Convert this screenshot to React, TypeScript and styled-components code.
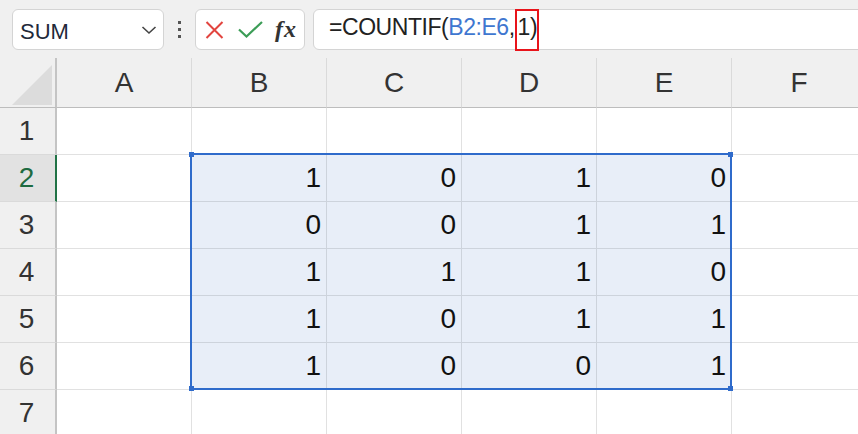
import React from 'react';
import styled, { createGlobalStyle, css } from 'styled-components';

const GlobalStyle = createGlobalStyle`
  html, body {
    margin: 0;
    padding: 0;
    background: #f0f0f0;
    overflow: hidden;
  }
  * {
    box-sizing: border-box;
  }
`;

const Page = styled.div`
  width: 858px;
  height: 434px;
  overflow: hidden;
  font-family: 'Liberation Sans', Arial, sans-serif;
  background: #f0f0f0;
`;

// Formula bar
const Toolbar = styled.div`
  height: 58px;
  display: flex;
  align-items: flex-start;
  padding: 9px 0 0 12px;
`;

const Box = styled.div`
  height: 41px;
  background: #fff;
  border: 1px solid #d4d4d4;
  border-radius: 6px;
  display: flex;
  align-items: center;
`;

const NameBox = styled(Box)`
  width: 152px;
  padding: 0 6px 0 7px;
  justify-content: space-between;
  font-size: 22px;
  color: #1f2a3a;
`;

const NameText = styled.span`
  padding-top: 5px;
`;

const Dots = styled.div`
  width: 31px;
  height: 41px;
  display: flex;
  flex-direction: column;
  align-items: center;
  justify-content: center;
  gap: 4px;
  span {
    width: 3px;
    height: 3px;
    background: #555;
  }
`;

const ActionBox = styled(Box)`
  width: 110px;
  padding: 0 0 0 9px;
  gap: 14px;
`;

const Fx = styled.span`
  font-family: 'Liberation Serif', 'Times New Roman', serif;
  font-style: italic;
  font-weight: bold;
  font-size: 24px;
  color: #333;
  margin-left: -2px;
  letter-spacing: 1px;
`;

const FormulaBox = styled(Box)`
  flex: 1;
  margin-left: 8px;
  margin-right: -20px;
  padding-left: 15px;
  font-size: 23px;
  letter-spacing: -0.45px;
  color: #222;
`;

const Text = styled.span<{ $ref?: boolean }>`
  padding-bottom: 4px;
  color: ${(p) => (p.$ref ? '#3f77d0' : '#222')};
`;

const Marked = styled.span`
  display: flex;
  align-items: center;
  height: 42px;
  padding: 0 0 4px 1px;
  border: 2px solid #e8141b;
`;

// Sheet
const Sheet = styled.div`
  position: relative;
  display: grid;
  grid-template-columns: 57px repeat(6, 135px);
  grid-template-rows: 50px repeat(7, 47px);
  background: #fff;
`;

const Corner = styled.div`
  background: #f0f0f0;
  border-right: 2px solid #c4c4c4;
  border-bottom: 1px solid #bdbdbd;
  display: flex;
  align-items: flex-end;
  justify-content: flex-end;
  padding: 0 3px 2px 0;
`;

const ColHead = styled.div`
  background: #f0f0f0;
  border-right: 1px solid #dadada;
  border-bottom: 1px solid #bdbdbd;
  display: flex;
  align-items: center;
  justify-content: center;
  font-size: 28px;
  color: #333;
`;

const RowHead = styled.div<{ $active?: boolean }>`
  background: ${(p) => (p.$active ? '#e2e2e2' : '#f0f0f0')};
  border-right: 2px solid ${(p) => (p.$active ? '#217346' : '#c4c4c4')};
  border-bottom: 1px solid #dadada;
  display: flex;
  align-items: center;
  justify-content: center;
  padding-right: 2px;
  font-size: 28px;
  color: ${(p) => (p.$active ? '#1e6b41' : '#333')};
`;

const Cell = styled.div<{ $sel?: boolean }>`
  border-right: 1px solid #e1e1e1;
  border-bottom: 1px solid #e1e1e1;
  display: flex;
  align-items: center;
  justify-content: flex-end;
  padding-right: 5px;
  font-size: 28px;
  color: #111;
  ${(p) =>
    p.$sel &&
    css`
      background: #e8eef8;
      border-color: #cdd3dc;
    `}
`;

const Selection = styled.div`
  position: absolute;
  left: 190px;
  top: 95px;
  width: 542px;
  height: 237px;
  border: 2px solid #2f6bcb;
  pointer-events: none;
`;

const Handle = styled.span<{ $pos: 'tl' | 'tr' | 'bl' | 'br' }>`
  position: absolute;
  width: 5px;
  height: 5px;
  background: #2f6bcb;
  ${(p) => (p.$pos[0] === 't' ? 'top: -3px;' : 'bottom: -3px;')}
  ${(p) => (p.$pos[1] === 'l' ? 'left: -3px;' : 'right: -3px;')}
`;

const columns = ['A', 'B', 'C', 'D', 'E', 'F'];

const data: (number | null)[][] = [
  [null, null, null, null],
  [1, 0, 1, 0],
  [0, 0, 1, 1],
  [1, 1, 1, 0],
  [1, 0, 1, 1],
  [1, 0, 0, 1],
  [null, null, null, null],
];

const App: React.FC = () => {
  return (
    <Page>
      <GlobalStyle />
      <Toolbar>
        <NameBox>
          <NameText>SUM</NameText>
          <svg width="16" height="10" viewBox="0 0 16 10">
            <path d="M1.5 2 L8 8 L14.5 2" fill="none" stroke="#444" strokeWidth="1.6" />
          </svg>
        </NameBox>
        <Dots>
          <span />
          <span />
          <span />
        </Dots>
        <ActionBox>
          <svg width="19" height="18" viewBox="0 0 19 18">
            <path d="M1.5 1 L17.5 17 M17.5 1 L1.5 17" stroke="#e2443f" strokeWidth="2" />
          </svg>
          <svg width="25" height="17" viewBox="0 0 25 17">
            <path d="M1 8.5 L8.5 15.5 L24 1" fill="none" stroke="#3c9d57" strokeWidth="2.2" />
          </svg>
          <Fx>fx</Fx>
        </ActionBox>
        <FormulaBox>
          <Text>=COUNTIF(</Text>
          <Text $ref>B2:E6</Text>
          <Text>,</Text>
          <Marked>1)</Marked>
        </FormulaBox>
      </Toolbar>
      <Sheet>
        <Corner>
          <svg width="40" height="40" viewBox="0 0 40 40">
            <path d="M40 0 L40 40 L0 40 Z" fill="#dcdcdc" />
          </svg>
        </Corner>
        {columns.map((c) => (
          <ColHead key={c}>{c}</ColHead>
        ))}
        {data.map((row, r) => (
          <React.Fragment key={r}>
            <RowHead $active={r === 1}>{r + 1}</RowHead>
            <Cell />
            {row.map((v, i) => (
              <Cell key={i} $sel={v !== null}>
                {v}
              </Cell>
            ))}
            <Cell />
          </React.Fragment>
        ))}
        <Selection>
          <Handle $pos="tl" />
          <Handle $pos="tr" />
          <Handle $pos="bl" />
          <Handle $pos="br" />
        </Selection>
      </Sheet>
    </Page>
  );
};

export default App;
